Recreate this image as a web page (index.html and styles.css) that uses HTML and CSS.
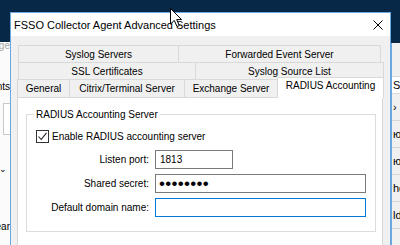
FILE: index.html
```html
<!DOCTYPE html>
<html lang="en">

<head>
    <meta charset="UTF-8">
    <title>FSSO Collector Agent Advanced Settings</title>
    <link rel="stylesheet" href="styles.css">
</head>

<body>
    <!-- windows behind the dialog -->
    <div class="behind-left">
        <div class="frag dim">Storage</div>
        <div class="frag gap-a">Agents</div>
        <div class="fake-box"></div>
        <div class="frag chevron">&#8964;</div>
        <div class="frag gap-b">Clear</div>
    </div>

    <div class="behind-right">
        <div class="r-tab">St</div>
        <div class="r-row">&rsaquo;</div>
        <div class="r-row">ю</div>
        <div class="r-row">ю</div>
        <div class="r-row">hc</div>
        <div class="r-row">ld</div>
    </div>

    <!-- Advanced settings dialog -->
    <div class="dialog">
        <div class="titlebar">
            <span class="title">FSSO Collector Agent Advanced Settings</span>
            <svg class="close" width="10" height="10" viewBox="0 0 10 10">
                <path d="M0.5 0.5 L9.5 9.5 M9.5 0.5 L0.5 9.5" stroke="#000" stroke-width="1" fill="none" />
            </svg>
        </div>

        <div class="dialog-body">
            <div class="tabs">
                <div class="tab-row back">
                    <div class="tab w-syslog">Syslog Servers</div>
                    <div class="tab w-forward">Forwarded Event Server</div>
                </div>
                <div class="tab-row back">
                    <div class="tab w-ssl">SSL Certificates</div>
                    <div class="tab w-source">Syslog Source List</div>
                </div>
                <div class="tab-row front">
                    <div class="tab w-general">General</div>
                    <div class="tab w-citrix">Citrix/Terminal Server</div>
                    <div class="tab w-exchange">Exchange Server</div>
                    <div class="tab w-radius active">RADIUS Accounting</div>
                </div>
            </div>

            <div class="tab-panel">
                <fieldset class="group">
                    <legend>RADIUS Accounting Server</legend>

                    <label class="check">
                        <span class="box">
                            <svg width="11" height="11" viewBox="0 0 11 11">
                                <path d="M1.5 5.5 L4.2 8.5 L9.5 1.8" stroke="#222" stroke-width="1.1" fill="none" />
                            </svg>
                        </span>
                        Enable RADIUS accounting server
                    </label>

                    <div class="form-grid">
                        <label for="listen-port">Listen port:</label>
                        <input type="text" id="listen-port" class="field short" value="1813">

                        <label for="shared-secret">Shared secret:</label>
                        <input type="password" id="shared-secret" class="field long secret" value="secret12">

                        <label for="domain-name">Default domain name:</label>
                        <input type="text" id="domain-name" class="field long focused" value="">
                    </div>
                </fieldset>
            </div>
        </div>
    </div>

    <!-- mouse pointer -->
    <svg class="cursor" width="13" height="20" viewBox="0 0 13 20">
        <path d="M0.5 0.5 V16 L4.3 12.4 L7 18.6 L9.3 17.6 L6.7 11.6 H11.6 Z" fill="#fff" stroke="#000" stroke-width="1" stroke-linejoin="round" />
    </svg>
</body>

</html>
```

FILE: styles.css
```css
body {
    margin: 0;
    width: 400px;
    height: 245px;
    overflow: hidden;
    position: relative;
    background-color: #082848;
    font-family: "Liberation Sans", Arial, sans-serif;
    font-size: 10px;
    color: #000;
}

/* ---- windows behind ---- */

.behind-left {
    position: absolute;
    left: 0;
    top: 42px;
    width: 10px;
    height: 203px;
    background: #fbfbfb;
    overflow: hidden;
}

.frag {
    text-align: right;
    white-space: nowrap;
    direction: rtl;
    line-height: 12px;
}

.frag.dim {
    color: #a8a8a8;
    margin-top: -2px;
}

.frag.gap-a {
    margin-top: 29px;
}

.fake-box {
    margin: 10px 0 0 3px;
    height: 30px;
    border: 1px solid #c8c8c8;
    border-right: none;
    background: #fff;
}

.frag.chevron {
    margin-top: 28px;
    font-size: 9px;
    padding-right: 3px;
}

.frag.gap-b {
    margin-top: 46px;
}

.behind-right {
    position: absolute;
    left: 391px;
    top: 43px;
    width: 9px;
    height: 202px;
    background: #f0f0f0;
    overflow: hidden;
    border-left: 1px solid #6aa7e0;
}

.r-tab {
    margin-top: 33px;
    height: 16px;
    line-height: 16px;
    padding-left: 1px;
    border-top: 1px solid #d9d9d9;
    border-bottom: 1px solid #d9d9d9;
    background: #fff;
    font-size: 11px;
}

.r-row {
    height: 26px;
    line-height: 26px;
    border-bottom: 1px solid #d6d6d6;
    padding-left: 1px;
    font-size: 11px;
}

/* ---- dialog ---- */

.dialog {
    position: absolute;
    left: 10px;
    top: 12px;
    width: 381px;
    height: 245px;
    box-sizing: border-box;
    border: 1px solid #6aa7e0;
    background: #f0f0f0;
}

.titlebar {
    height: 23px;
    background: #fff;
    display: flex;
    align-items: center;
    justify-content: space-between;
    padding: 0 7px 0 3px;
}

.title {
    font-size: 11px;
}

.dialog-body {
    padding: 9px 0 0 6px;
}

/* ---- tabs ---- */

.tab-row {
    display: flex;
}

.tab-row.back {
    height: 17px;
    margin-left: 1px;
}

.tab-row.front {
    height: 18px;
    align-items: flex-end;
}

.tab {
    box-sizing: border-box;
    height: 100%;
    border: 1px solid #d9d9d9;
    border-bottom: none;
    background: #f0f0f0;
    text-align: center;
    line-height: 17px;
    white-space: nowrap;
}

.tab + .tab {
    margin-left: -1px;
}

.w-syslog { width: 161px; }
.w-forward { width: 203px; }
.w-ssl { width: 178px; }
.w-source { width: 189px; }
.w-general { width: 53px; }
.w-citrix { width: 116px; }
.w-exchange { width: 94px; }
.w-radius { width: 107px; }

.tab.active {
    position: relative;
    z-index: 1;
    height: 21px;
    margin-bottom: -1px;
    background: #fff;
    line-height: 16px;
}

.tab-panel {
    box-sizing: border-box;
    width: 366px;
    height: 160px;
    background: #fff;
    border: 1px solid #d9d9d9;
    padding: 10px 0 0 8px;
}

/* ---- group box ---- */

.group {
    box-sizing: border-box;
    width: 350px;
    margin: 0;
    padding: 0 9px 14px 9px;
    border: 1px solid #dcdcdc;
}

.group legend {
    padding: 0 2px;
    margin-left: -2px;
    line-height: 13px;
}

.check {
    display: flex;
    align-items: center;
    gap: 3px;
    margin-top: 9px;
    height: 13px;
}

.box {
    box-sizing: border-box;
    width: 13px;
    height: 13px;
    border: 1px solid #333;
    background: #fff;
    display: flex;
}

.form-grid {
    display: grid;
    grid-template-columns: 113px auto;
    column-gap: 6px;
    row-gap: 5px;
    align-items: center;
    margin-top: 7px;
}

.form-grid label {
    text-align: right;
}

.field {
    box-sizing: border-box;
    height: 19px;
    border: 1px solid #7a7a7a;
    border-radius: 0;
    padding: 0 4px;
    font-family: "Liberation Sans", Arial, sans-serif;
    font-size: 10px;
    background: #fff;
    outline: none;
    justify-self: start;
}

.field.short {
    width: 78px;
}

.field.long {
    width: 211px;
}

.field.secret {
    font-size: 17px;
    letter-spacing: 0.3px;
    padding-left: 3px;
}

.field.focused {
    border-color: #0078d7;
}

.cursor {
    position: absolute;
    left: 170px;
    top: 8px;
}
```
